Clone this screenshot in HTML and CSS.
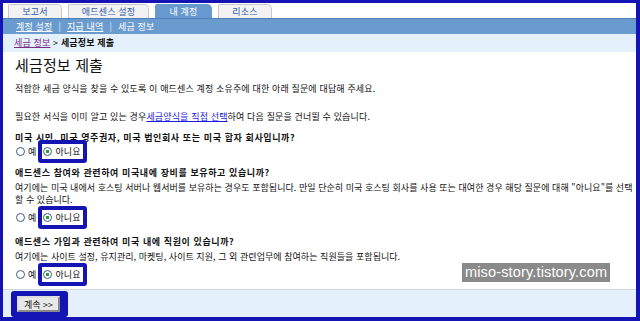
FILE: index.html
```html
<!DOCTYPE html>
<html lang="ko">
<head>
    <meta charset="UTF-8">
    <title>세금정보 제출</title>
    <link rel="stylesheet" href="styles.css">
</head>
<body>
    <div class="page">
        <div class="tabs">
            <span class="tab">보고서</span>
            <span class="tab wide">애드센스 설정</span>
            <span class="tab active">내 계정</span>
            <span class="tab">리소스</span>
        </div>
        <div class="subnav">
            <a href="#">계정 설정</a><span class="sep">|</span><a href="#">지급 내역</a><span class="sep">|</span><span>세금 정보</span>
        </div>
        <div class="crumb">
            <a href="#">세금 정보</a> &gt; <b>세금정보 제출</b>
        </div>

        <div class="content">
            <h1>세금정보 제출</h1>
            <p class="intro">적합한 세금 양식을 찾을 수 있도록 이 애드센스 계정 소유주에 대한 아래 질문에 대답해 주세요.</p>
            <p class="intro second">필요한 서식을 이미 알고 있는 경우<a href="#">세금양식을 직접 선택</a>하여 다음 질문을 건너뛸 수 있습니다.</p>

            <div class="question first">
                <div class="q">미국 시민, 미국 영주권자, 미국 법인회사 또는 미국 합자 회사입니까?</div>
                <div class="choices">
                    <label class="choice"><span class="radio"></span>예</label>
                    <label class="choice mark"><span class="radio on"></span>아니요</label>
                </div>
            </div>

            <div class="question">
                <div class="q">애드센스 참여와 관련하여 미국내에 장비를 보유하고 있습니까?</div>
                <div class="desc">여기에는 미국 내에서 호스팅 서버나 웹서버를 보유하는 경우도 포함됩니다. 만일 단순히 미국 호스팅 회사를 사용 또는 대여한 경우 해당 질문에 대해 "아니요"를 선택할 수 있습니다.</div>
                <div class="choices">
                    <label class="choice"><span class="radio"></span>예</label>
                    <label class="choice mark"><span class="radio on"></span>아니요</label>
                </div>
            </div>

            <div class="question last">
                <div class="q">애드센스 가입과 관련하여 미국 내에 직원이 있습니까?</div>
                <div class="desc">여기에는 사이트 설정, 유지관리, 마켓팅, 사이트 지원, 그 외 관련업무에 참여하는 직원들을 포함됩니다.</div>
                <div class="choices">
                    <label class="choice"><span class="radio"></span>예</label>
                    <label class="choice mark"><span class="radio on"></span>아니요</label>
                </div>
            </div>
        </div>

        <div class="footer">
            <span class="mark-btn"><button>계속 &gt;&gt;</button></span>
        </div>

        <div class="watermark">miso-story.tistory.com</div>
    </div>
</body>
</html>
```

FILE: styles.css
```css
html, body {
    margin: 0;
    padding: 0;
}
body {
    background-color: #1414b4;
    font-family: "Noto Sans CJK KR", "Noto Sans", sans-serif;
    font-size: 9px;
    letter-spacing: 0.15px;
    color: #111;
    height: 321px;
    overflow: hidden;
}
.page {
    position: relative;
    margin: 3px 4px 0 3px;
    height: 313px;
    background-color: #fff;
}
.tabs {
    display: flex;
    gap: 6px;
    padding: 1px 0 0 5px;
    height: 14px;
}
.tab {
    width: 52px;
    height: 13px;
    line-height: 13px;
    text-align: center;
    background-color: #f2f2f2;
    border: 1px solid #c8c8c8;
    border-bottom: none;
    border-radius: 2px 5px 0 0;
    color: #2f5aa8;
}
.tab.wide {
    width: 79px;
}
.tab.active {
    width: 55px;
    background-color: #6899ce;
    border-color: #6899ce;
    color: #fff;
}
.subnav {
    height: 15px;
    line-height: 15px;
    background-color: #6a9bcf;
    border-top: 1px solid #4d7fb6;
    padding-left: 13px;
    color: #fff;
}
.subnav a {
    color: #fff;
}
.subnav .sep {
    margin: 0 6px;
    color: #dce8f5;
}
.crumb {
    height: 18px;
    line-height: 18px;
    background-color: #e4f1fc;
    padding-left: 11px;
}
.crumb a {
    color: #7a2a8c;
}
.content {
    padding-left: 12px;
}
h1 {
    margin: 4px 0 0;
    font-size: 15px;
    line-height: 18px;
    font-weight: normal;
}
.intro {
    margin: 8px 0 0;
    line-height: 13px;
}
.intro.second {
    margin-top: 15px;
}
.intro a {
    color: #1a1ae0;
}
.question {
    margin-top: 4px;
}
.question.first {
    margin-top: 8px;
}
.question.last {
    margin-top: 7px;
}
.q {
    font-weight: bold;
    line-height: 13px;
    letter-spacing: 0.6px;
}
.desc {
    margin-top: 3px;
    line-height: 12px;
    letter-spacing: 0.05px;
}
.choices {
    display: flex;
    align-items: center;
    margin-top: -3px;
    height: 21px;
    padding-left: 1px;
}
.desc + .choices {
    margin-top: 1px;
}
.last .desc + .choices {
    margin-top: 0;
    height: 22px;
}
.choice {
    display: flex;
    align-items: center;
    gap: 3px;
}
.choice.mark {
    margin-left: 2px;
    padding: 1px 2px 1px 1px;
    background-color: #fff;
    border: 4px solid #1414b4;
    border-radius: 3px;
}
.radio {
    box-sizing: border-box;
    width: 9px;
    height: 9px;
    border: 1px solid #3d5c8c;
    border-radius: 50%;
    background-color: #fff;
}
.radio.on {
    background: radial-gradient(circle, #2aa02a 0 1.6px, #fff 2px);
}
.footer {
    margin-top: 4px;
    height: 27px;
    background-color: #e4f1fc;
    border-top: 1px solid #cfd8e0;
    padding-left: 8px;
    display: flex;
    align-items: center;
}
.mark-btn {
    display: inline-block;
    padding: 5px 8px 5px 6px;
    background-color: #1414b4;
    border-radius: 3px;
}
button {
    font-family: "Noto Sans CJK KR", "Noto Sans", sans-serif;
    font-size: 9px;
    height: 16px;
    padding: 0 5px;
    background-color: #e8e8e8;
    border: 2px outset #ddd;
    color: #111;
}
.watermark {
    position: absolute;
    left: 459px;
    top: 260px;
    padding: 0 3px;
    height: 19px;
    line-height: 19px;
    background-color: #8a8a8a;
    color: #fff;
    font-family: "Liberation Sans", sans-serif;
    font-size: 14.5px;
}
```
